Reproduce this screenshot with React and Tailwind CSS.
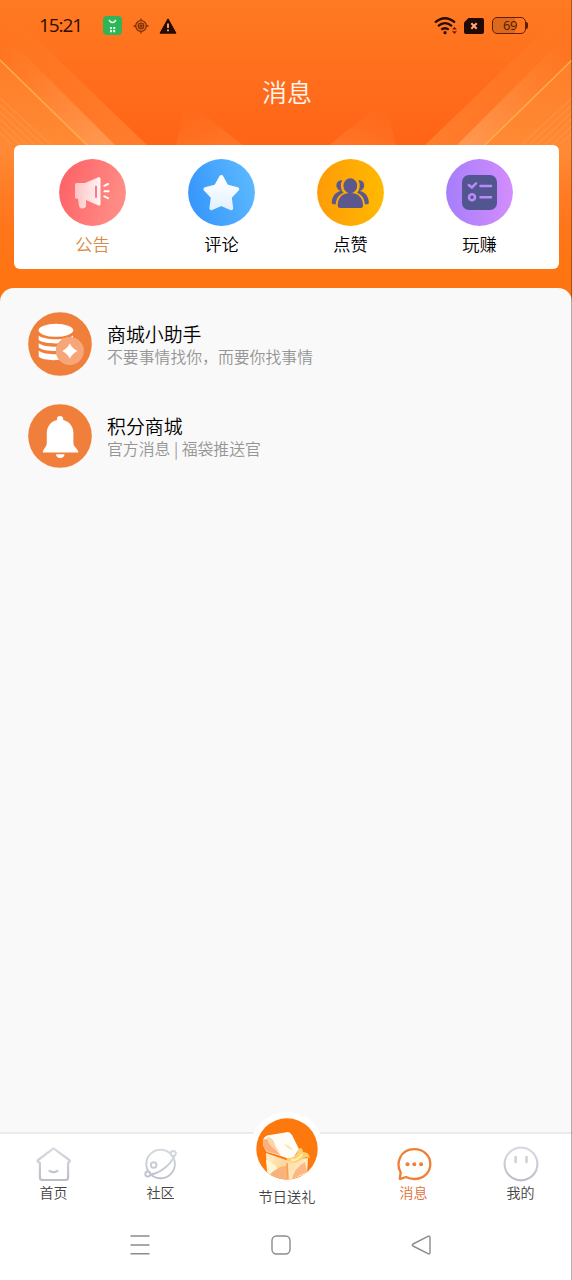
import clsx from 'clsx';

const shortcuts = [
  { label: '公告', icon: HornIcon, active: true },
  { label: '评论', icon: StarIcon },
  { label: '点赞', icon: PeopleIcon },
  { label: '玩赚', icon: TaskIcon },
];

const messages = [
  { title: '商城小助手', desc: '不要事情找你，而要你找事情', icon: CoinsIcon },
  { title: '积分商城', desc: '官方消息 | 福袋推送官', icon: BellIcon },
];

function HornIcon() {
  return (
    <svg viewBox="0 0 67 67" className="size-[67px]">
      <defs>
        <linearGradient id="horn" x1="0" y1="0" x2="1" y2="0.3">
          <stop offset="0" stopColor="#fd5f63" />
          <stop offset="1" stopColor="#ff8b85" />
        </linearGradient>
        <linearGradient id="hornBody" x1="0" y1="0" x2="1" y2="0">
          <stop offset="0" stopColor="#ffc2c4" />
          <stop offset="1" stopColor="#fff5f5" />
        </linearGradient>
      </defs>
      <circle cx="33.5" cy="33.5" r="33.4" fill="url(#horn)" />
      <path
        d="M17.5 24H26L39.5 18.3Q41.5 17.8 41.5 20V45Q41.5 47 39.5 46.4L27 41V47Q26.5 49.5 23 49.5Q20.5 49.5 20 47L19 39.8H17.5Q16 39.5 16 38V25.5Q16 24 17.5 24Z"
        fill="url(#hornBody)"
      />
      <path d="M37 27.5V38" stroke="#fb7a7c" strokeWidth="2" strokeLinecap="round" />
      <path d="M45.3 26.8L49 25M45.5 32.3H49.6M45.3 37.3L49 39.2" stroke="#fff" strokeWidth="2" strokeLinecap="round" />
    </svg>
  );
}

function StarIcon() {
  return (
    <svg viewBox="0 0 67 67" className="size-[67px]">
      <defs>
        <linearGradient id="starBg" x1="0" y1="0.6" x2="1" y2="0.3">
          <stop offset="0" stopColor="#3696fb" />
          <stop offset="1" stopColor="#5cb9ff" />
        </linearGradient>
        <linearGradient id="starBody" x1="0" y1="0" x2="0" y2="1">
          <stop offset="0" stopColor="#fff" />
          <stop offset="1" stopColor="#e3f2ff" />
        </linearGradient>
      </defs>
      <circle cx="33.5" cy="33.5" r="33.4" fill="url(#starBg)" />
      <path
        d="M33.3 18L38.6 27.5L49.2 30.2L41.7 38L43.2 49.2L33.3 45L23.4 49.2L24.9 38L17.4 30.2L28 27.5Z"
        fill="url(#starBody)"
        stroke="url(#starBody)"
        strokeWidth="4"
        strokeLinejoin="round"
      />
    </svg>
  );
}

function PeopleIcon() {
  return (
    <svg viewBox="0 0 67 67" className="size-[67px]">
      <defs>
        <linearGradient id="people" x1="0" y1="0" x2="1" y2="0">
          <stop offset="0" stopColor="#fe9c07" />
          <stop offset="1" stopColor="#ffb900" />
        </linearGradient>
      </defs>
      <circle cx="33.5" cy="33.5" r="33.4" fill="url(#people)" />
      <g fill="#5a588c">
        <ellipse cx="33.3" cy="26.8" rx="6.9" ry="7.5" />
        <path d="M20.7 46.5C20.7 39.5 24.5 34 33.3 34C42.1 34 46 39.5 46 46.5Q46 49 43.5 49H23.2Q20.7 49 20.7 46.5Z" />
        <path d="M25.3 21.3C20.5 20.5 18.5 25 19.8 28.5Q21 31.5 24 32C18 32.5 14.5 39 14.8 44Q15 45.5 17 45.3H18.8C19 40 21.5 36 26.5 33.8C23.5 30.5 23 25 25.3 21.3Z" />
        <path d="M41.3 21.3C46.1 20.5 48.1 25 46.8 28.5Q45.6 31.5 42.6 32C48.6 32.5 52.1 39 51.8 44Q51.6 45.5 49.6 45.3H47.8C47.6 40 45.1 36 40.1 33.8C43.1 30.5 43.6 25 41.3 21.3Z" />
      </g>
    </svg>
  );
}

function TaskIcon() {
  return (
    <svg viewBox="0 0 67 67" className="size-[67px]" fill="none">
      <defs>
        <linearGradient id="task" x1="0" y1="0" x2="1" y2="0">
          <stop offset="0" stopColor="#a67efb" />
          <stop offset="1" stopColor="#d38dfd" />
        </linearGradient>
      </defs>
      <circle cx="33.5" cy="33.5" r="33.4" fill="url(#task)" />
      <rect x="16" y="16" width="35" height="35" rx="7" fill="#515690" />
      <g stroke="#b98af8" strokeWidth="2.5" strokeLinecap="round" strokeLinejoin="round">
        <path d="M22.8 26L25.8 28.5L30 24.3" />
        <path d="M34.5 27H45M34.5 38.3H45" />
        <circle cx="26" cy="38.3" r="3" />
      </g>
    </svg>
  );
}

function CoinsIcon() {
  return (
    <svg viewBox="0 0 64 64" className="size-16">
      <circle cx="32" cy="32" r="31.8" fill="#f07f3c" />
      <g fill="#fff">
        <ellipse cx="27.9" cy="18.3" rx="17.3" ry="6.5" />
        <path d="M10.7 23.5C17 28.5 39 28.5 45 23.5V28C40 32.5 16 32.5 10.7 28Z" />
        <path d="M10.7 31.3C17 36 39 36 45 31.3V35.5C40 40.3 16 40.3 10.7 35.5Z" />
        <path d="M10.7 38.8C17 43.5 39 43.5 45 38.8V43C38 49.5 16 49.5 10.7 44.8Z" />
      </g>
      <circle cx="41.8" cy="39" r="14" fill="#f7a679" />
      <path d="M41.8 31.5Q44.3 36.5 49.3 39Q44.3 41.5 41.8 46.5Q39.3 41.5 34.3 39Q39.3 36.5 41.8 31.5Z" fill="#fff" />
    </svg>
  );
}

function BellIcon() {
  return (
    <svg viewBox="0 0 64 64" className="size-16">
      <circle cx="32" cy="32" r="31.8" fill="#f07f3c" />
      <g fill="#fff">
        <path d="M29 16V15Q29 12 32.1 12Q35.2 12 35.2 15V16C41.5 17.5 45.4 22.5 45.4 29V39C45.4 43 50.4 45 50.4 48.4H14.8C14.8 45 18.8 43 18.8 39V29C18.8 22.5 22.7 17.5 29 16Z" />
        <path d="M27.8 50.3H36.7Q36 54 32.2 54Q28.4 54 27.8 50.3Z" />
      </g>
    </svg>
  );
}

function HomeIcon() {
  return (
    <svg viewBox="0 0 36 36" className="size-9" fill="none" stroke="url(#grey)" strokeWidth="2.2" strokeLinecap="round" strokeLinejoin="round">
      <defs>
        <linearGradient id="grey" gradientUnits="userSpaceOnUse" x1="0" y1="0" x2="0" y2="36">
          <stop offset="0" stopColor="#d9dce3" />
          <stop offset="1" stopColor="#b9bdc7" />
        </linearGradient>
      </defs>
      <path d="M17.5 2.3L2 14Q1 15 2 15.7L3.9 17V31.5Q3.9 34 6.5 34H29.5Q32.1 34 32.1 31.5V17L33.5 15.7Q34.5 15 33.3 14Z" />
      <path d="M13.5 24.8Q17.5 27.5 21.5 24.8" />
    </svg>
  );
}

function PlanetIcon() {
  return (
    <svg viewBox="0 0 36 36" className="size-9" fill="none" stroke="url(#grey)" strokeWidth="1.9" strokeLinecap="round">
      <circle cx="17.6" cy="18" r="14.3" />
      <circle cx="10.7" cy="19" r="2.8" />
      <path d="M7.5 28.5C17 27 28 18.5 31 10.2" />
      <circle cx="4.8" cy="28" r="2.5" fill="#fff" />
      <circle cx="30.3" cy="7.5" r="2.5" fill="#fff" />
    </svg>
  );
}

function ChatIcon() {
  return (
    <svg viewBox="0 0 36 36" className="size-9" fill="none" stroke="#ee7f35" strokeWidth="2.3" strokeLinecap="round" strokeLinejoin="round">
      <path d="M4.7 26.5C-0.5 17.5 4 3.2 18.3 3.2C28 3.2 34.3 10 34.3 18C34.3 27 27 33 18.5 33C15 33 12 32 10 31L4.5 32.9Q3.5 33 3.8 32Z" />
      <g fill="#ee7f35" stroke="none">
        <circle cx="11.5" cy="18.2" r="2" />
        <circle cx="18.3" cy="18.2" r="2" />
        <circle cx="25.1" cy="18.2" r="2" />
      </g>
    </svg>
  );
}

function FaceIcon() {
  return (
    <svg viewBox="0 0 36 36" className="size-9" fill="none" stroke="url(#grey)" strokeWidth="2.1">
      <circle cx="18" cy="18" r="16.4" />
      <path d="M12.6 11V16M23.5 11V16" stroke="#cfd2d6" strokeWidth="2.6" strokeLinecap="round" />
    </svg>
  );
}

function GiftIcon() {
  return (
    <svg viewBox="0 0 62 62" className="size-[62px]">
      <defs>
        <clipPath id="giftClip">
          <circle cx="31" cy="31" r="30.7" />
        </clipPath>
        <linearGradient id="box" x1="0" y1="0" x2="1" y2="0.4">
          <stop offset="0" stopColor="#fff3cf" />
          <stop offset="0.5" stopColor="#ffd69c" />
          <stop offset="1" stopColor="#fff0cc" />
        </linearGradient>
      </defs>
      <g clipPath="url(#giftClip)">
        <rect width="62" height="62" fill="#fd780d" />
        <path d="M10 35L30 42L52 40L51 56L32 62L11 54Z" fill="url(#box)" />
        <path d="M10 42Q21 45 27 61L12 56Z" fill="#fff6d6" />
        <path d="M14 56Q24 47 31 48L32 61L22 62Z" fill="#f9b37a" />
        <path d="M36 61Q38 50 49 44L51 54Z" fill="#fbb885" />
        <path d="M31 45L32 61" stroke="#f7a04e" strokeWidth="1.5" />
        <path d="M7 22Q9 17 14 17L32 14Q34 14 36 17L43 31L36 42L22 37L11 34Q6 28 7 22Z" fill="#fffdf8" />
        <path d="M7 22Q12 19 16 25Q19 32 25 37L12 34Q6 29 7 22Z" fill="#fcae7c" />
        <path d="M11 19Q16 19 18 24Q19 29 24 34Q15 30 12 24Z" fill="#ffd3a8" />
        <path d="M28 26Q33 26 37 32Q31 31 28 26Z" fill="#f7ecb0" />
        <path d="M42 32Q46 27 47 34Q53 34 54 40Q48 38 45 42Q38 47 32 43Q28 39 35 40Q41 38 42 32Z" fill="#ffd071" />
        <path d="M35 42Q42 43 46 36" stroke="#fff1b5" strokeWidth="2" fill="none" />
      </g>
    </svg>
  );
}

// Light beams behind the header, the right half mirrors the left one
function Beams({ flip }) {
  return (
    <svg viewBox="0 0 286 290" className={clsx('h-[290px] w-[286px]', flip && '-scale-x-100')}>
      <defs>
        <linearGradient id="beam" gradientUnits="userSpaceOnUse" x1="10" y1="40" x2="100" y2="146">
          <stop offset="0" stopColor="#ff9540" stopOpacity="0" />
          <stop offset="1" stopColor="#ff9c54" stopOpacity="0.85" />
        </linearGradient>
        <linearGradient id="beamSoft" gradientUnits="userSpaceOnUse" x1="10" y1="20" x2="120" y2="146">
          <stop offset="0" stopColor="#ff8a30" stopOpacity="0" />
          <stop offset="1" stopColor="#ff8938" stopOpacity="0.65" />
        </linearGradient>
        <linearGradient id="beamFaint" gradientUnits="userSpaceOnUse" x1="190" y1="105" x2="205" y2="150">
          <stop offset="0" stopColor="#ff7d2c" stopOpacity="0" />
          <stop offset="1" stopColor="#ff8234" stopOpacity="0.55" />
        </linearGradient>
        <linearGradient id="corner" x1="0" y1="0" x2="0" y2="1">
          <stop offset="0" stopColor="#ff8a32" stopOpacity="0.5" />
          <stop offset="0.4" stopColor="#ff8a35" />
          <stop offset="1" stopColor="#ff7414" stopOpacity="0" />
        </linearGradient>
      </defs>
      <path d="M186 100L244 146H176Z" fill="url(#beamFaint)" />
      <path d="M0 5L40 42L148 146H0Z" fill="url(#beamSoft)" />
      <path d="M0 40L20 50L116 146H86L0 62Z" fill="url(#beam)" />
      <path d="M0 61L87 146L100 290H0Z" fill="url(#corner)" />
      <path d="M0 60L88 146" stroke="#ffae4d" strokeWidth="1.4" />
      <path
        d="M0 98L52 146M0 105L44 146M0 112L36 146M0 119L28 146M0 126L21 146M0 133L14 146"
        stroke="#ffa45c"
        strokeOpacity="0.35"
        strokeWidth="1.5"
      />
    </svg>
  );
}

function StatusBar() {
  return (
    <div className="flex h-[51px] items-center pl-[39px] pr-11 font-normal text-[#2b0d02]">
      <span className="w-16 font-['Open_Sans','Noto_Sans',sans-serif] text-[19px] tracking-[-1.1px]">15:21</span>
      <svg viewBox="0 0 19 19" className="size-[19px]">
        <rect width="19" height="19" rx="4" fill="#2fb457" />
        <path d="M6 4Q9.5 9 13 4" stroke="#e5ffe9" strokeWidth="1.4" fill="none" />
        <path d="M7 11H9V13H7ZM10.2 11H12.2V13H10.2ZM7 14H9V16.3H7ZM10.2 14H12.2V16.3H10.2Z" fill="#e5ffe9" />
      </svg>
      <svg viewBox="0 0 16 16" className="ml-[11px] size-4" fill="none" stroke="#7d3205" strokeWidth="1.3">
        <circle cx="8" cy="8" r="5.3" />
        <circle cx="8" cy="8" r="2.8" />
        <circle cx="8" cy="8" r="1" fill="#7d3205" />
        <path d="M8 0.5V3M8 13V15.5M0.5 8H3M13 8H15.5" />
      </svg>
      <svg viewBox="0 0 18 16" className="ml-[10px] h-4 w-[18px]">
        <path d="M9 0.8L17 15.2H1Z" fill="#250b02" stroke="#250b02" strokeLinejoin="round" />
        <path d="M9 5.5V10M9 11.5V13.3" stroke="#ffb27a" strokeWidth="1.8" />
      </svg>
      <div className="ml-auto flex items-center">
        <svg viewBox="0 0 24 19" className="h-[19px] w-6" fill="none" stroke="#250b02" strokeWidth="2.2">
          <path d="M1 6.5Q11 -2 21 6.5M4 10.2Q11 4.2 18 10.2M7.2 13.7Q11 10.8 14.8 13.7" />
          <circle cx="11" cy="16.7" r="1.6" fill="#250b02" stroke="none" />
          <path d="M18 13.5L20.5 10.8L23 13.5ZM18 15.3H23L20.5 18Z" fill="#6b1c04" stroke="none" />
        </svg>
        <svg viewBox="0 0 20 16" className="ml-1.5 h-4 w-5">
          <path d="M4.5 0H18Q20 0 20 2V14Q20 16 18 16H2Q0 16 0 14V4.5Z" fill="#210a03" />
          <path d="M7.3 5.2L12.7 10.8M12.7 5.2L7.3 10.8" stroke="#ffa97d" strokeWidth="2" />
        </svg>
        <div className="ml-2 flex h-[17px] w-[34px] items-center justify-center rounded-[5px] border-[1.5px] border-[#5d2004] bg-linear-to-r from-[#dd6a1c] from-70% to-transparent to-70% pl-0.5 font-['Open_Sans','Noto_Sans',sans-serif] text-[13px] tracking-tight text-[#4a1a04]">
          69
        </div>
        <div className="h-[7px] w-0.5 rounded-r-sm bg-[#5d2004]" />
      </div>
    </div>
  );
}

function TabItem({ icon: Icon, label, active }) {
  return (
    <div className="flex w-[107px] flex-col items-center pt-3">
      <Icon />
      <span className={clsx('text-sm leading-[20px]', active ? 'text-[#e2703a]' : 'text-[#444]')}>{label}</span>
    </div>
  );
}

export default function App() {
  return (
    <div className="relative flex h-[1280px] w-[572px] flex-col overflow-hidden bg-linear-to-b from-[#ff7a22] via-[#ff6417] via-[140px] to-[#ff7412] to-[260px] font-['Noto_Sans_CJK_SC',sans-serif] font-[350]">
      <div className="absolute inset-x-0 top-0 flex">
        <Beams />
        <Beams flip />
      </div>

      <header className="relative h-[288px] shrink-0">
        <StatusBar />
        <h1 className="mt-[22px] pl-0.5 text-center text-[25px] leading-9 text-[#fff8f2]">消息</h1>
        <div className="ml-[14px] mr-[13px] mt-[35.5px] flex h-[124.5px] rounded-md bg-white pl-[14px] pr-[15px] pt-[14px]">
          {shortcuts.map(({ label, icon: Icon, active }) => (
            <div key={label} className="flex flex-1 flex-col items-center">
              <Icon />
              <span className={clsx('mt-1.5 text-[17.3px] leading-6', active ? 'text-[#d98c45]' : 'text-black')}>
                {label}
              </span>
            </div>
          ))}
        </div>
      </header>

      <main className="relative flex-1 rounded-t-[14px] bg-[#f9f9f9] pt-6">
        {messages.map(({ title, desc, icon: Icon }) => (
          <div key={title} className="mb-7 flex h-16 items-center pl-7">
            <Icon />
            <div className="ml-[15px] pt-[2px]">
              <div className="text-[18.9px] leading-[24px] text-black">{title}</div>
              <div className="text-[15.85px] leading-[22px] text-[#959595]">{desc}</div>
            </div>
          </div>
        ))}
      </main>

      <nav className="relative flex h-[79px] w-[574px] shrink-0 border-t-2 border-[#ebebeb] bg-white">
        <TabItem icon={HomeIcon} label="首页" />
        <TabItem icon={PlanetIcon} label="社区" />
        <div className="-mt-[22px] flex w-[146px] flex-col items-center">
          <div className="rounded-full bg-white p-[6px]">
            <GiftIcon />
          </div>
          <span className="text-[14.2px] leading-[20px] whitespace-nowrap text-[#444]">节日送礼</span>
        </div>
        <TabItem icon={ChatIcon} label="消息" active />
        <TabItem icon={FaceIcon} label="我的" />
      </nav>

      <div className="relative flex h-[69px] shrink-0 items-center justify-between bg-white pb-0.5 pl-[130px] pr-[141px]">
        <svg viewBox="0 0 20 20" className="size-5" stroke="#8c8c8c" strokeWidth="1.4">
          <path d="M0.5 1H19.5M0.5 10H19.5M0.5 18.7H19.5" />
        </svg>
        <svg viewBox="0 0 20 20" className="size-5" fill="none" stroke="#8c8c8c" strokeWidth="1.4">
          <rect x="1" y="1" width="18" height="18" rx="4.5" />
        </svg>
        <svg viewBox="0 0 20 20" className="size-5" fill="none" stroke="#8c8c8c" strokeWidth="1.4" strokeLinejoin="round">
          <path d="M17.5 1.2Q19 0.8 19 2.5V17.5Q19 19.2 17.5 18.8L2 11Q0.5 10 2 9Z" />
        </svg>
      </div>

      <div className="absolute inset-y-0 right-0 w-px bg-black/30" />
    </div>
  );
}
